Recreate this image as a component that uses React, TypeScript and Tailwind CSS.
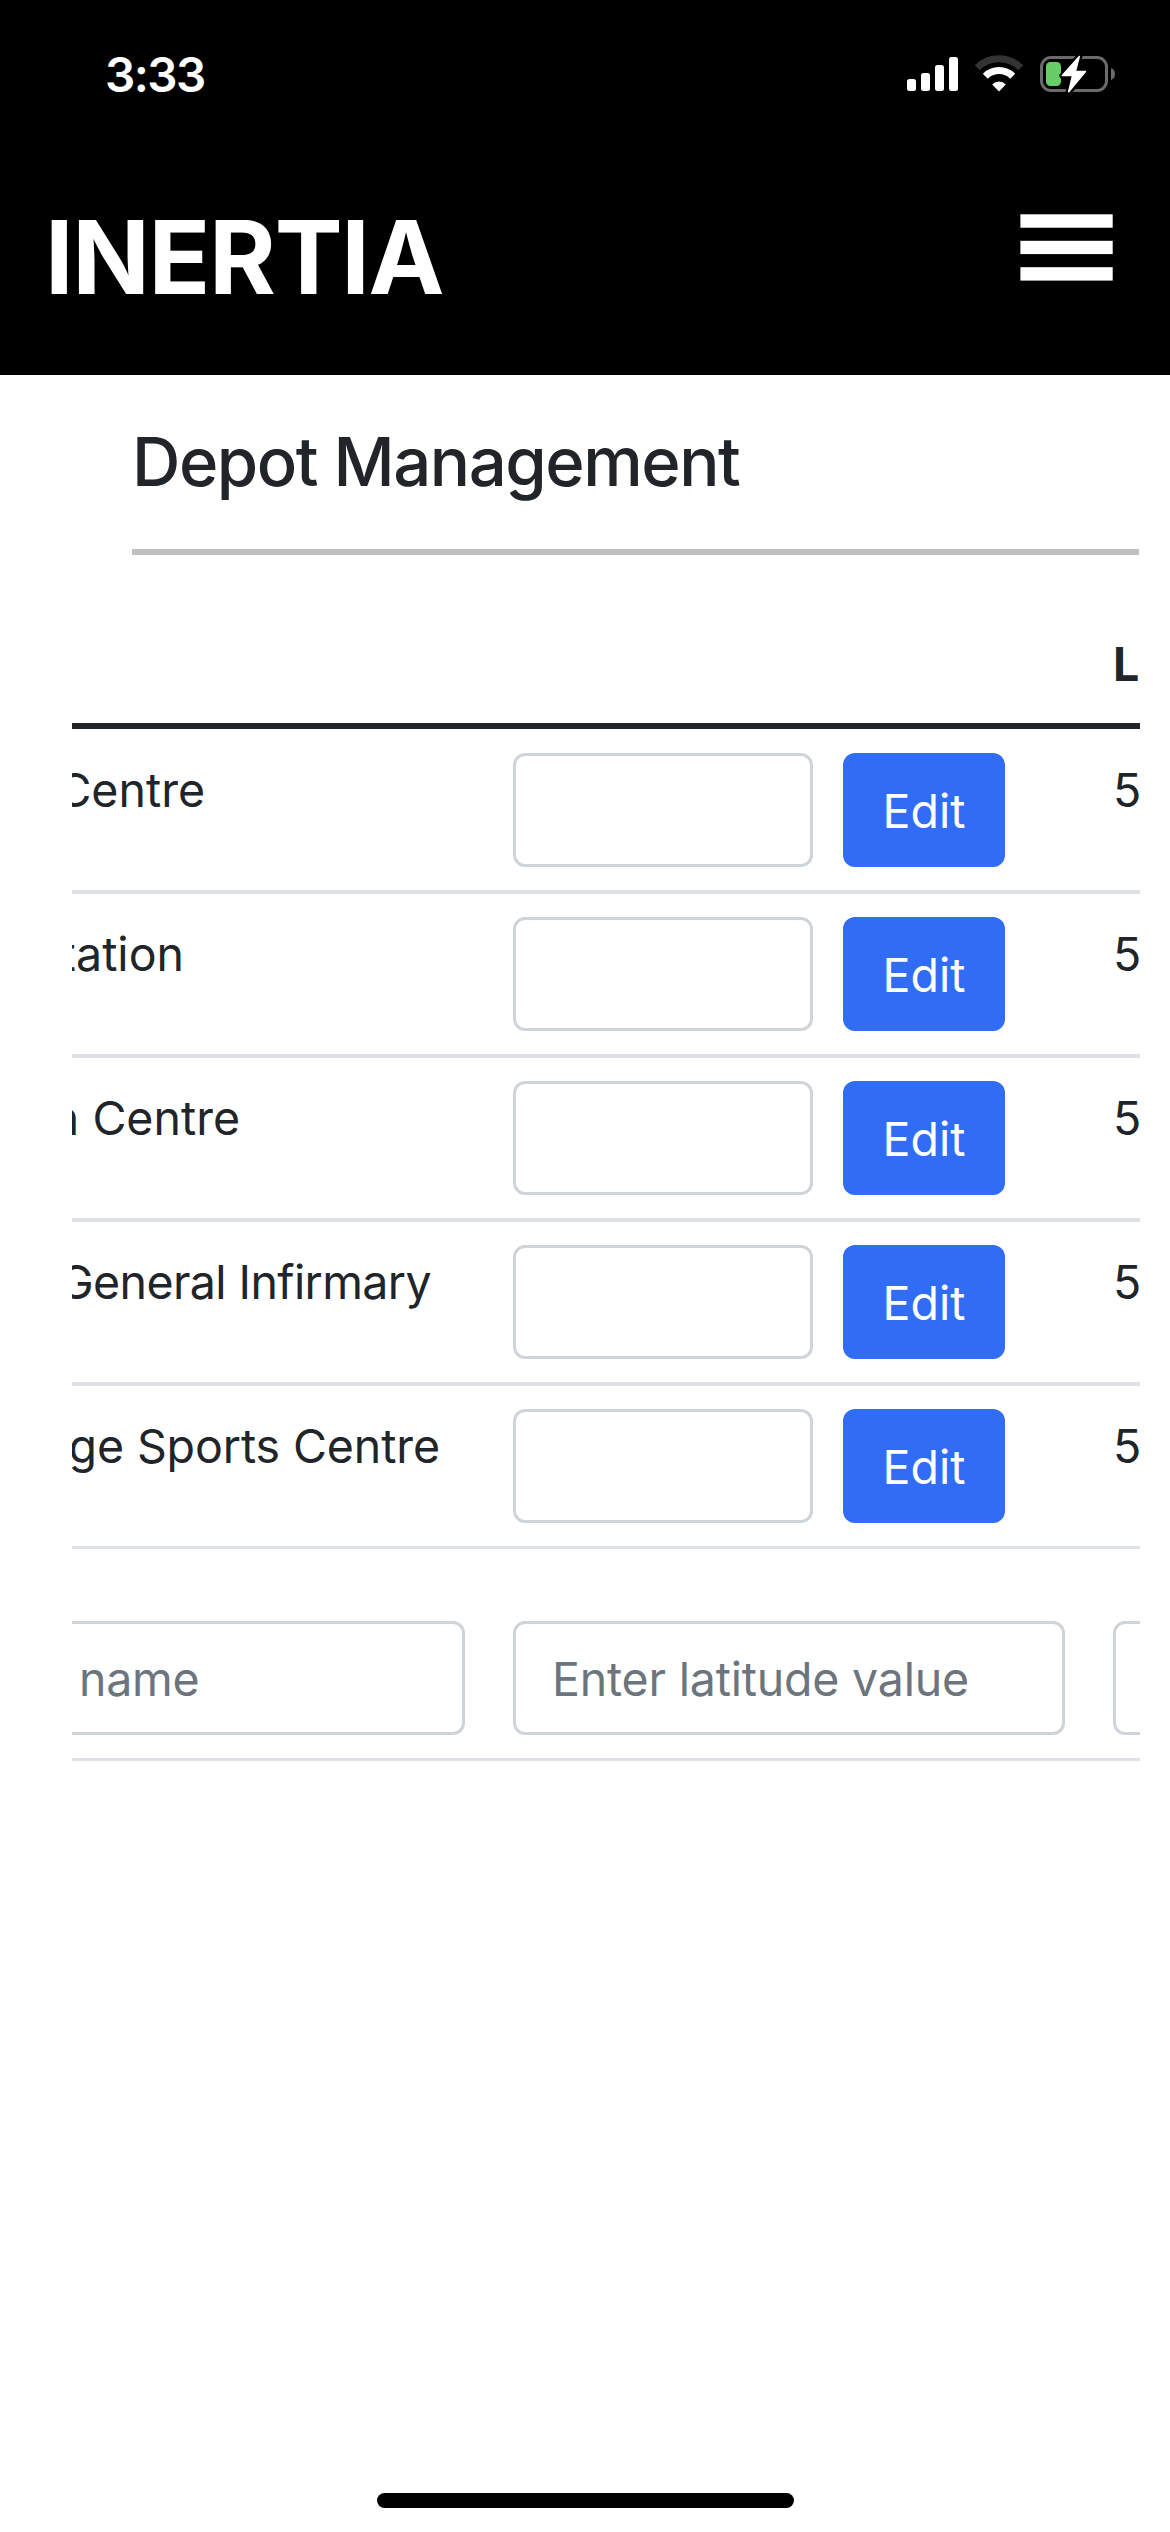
type Depot = { tail: string; box: string };

const depots: Depot[] = [
  { tail: "Centre", box: "w-[133px]" },
  { tail: "tation", box: "w-[112px]" },
  { tail: "n Centre", box: "w-[168px]" },
  { tail: "General Infirmary", box: "w-[359px] tracking-[-0.6px]" },
  { tail: "ge Sports Centre", box: "w-[368px] tracking-[-0.1px]" },
];

function SignalIcon() {
  return (
    <svg width="52" height="36" viewBox="0 0 52 36" fill="#fff">
      <rect x="0" y="23" width="9" height="12" rx="2.5" />
      <rect x="14" y="17" width="9" height="18" rx="2.5" />
      <rect x="28" y="9" width="9" height="26" rx="2.5" />
      <rect x="42" y="1" width="9" height="34" rx="2.5" />
    </svg>
  );
}

function WifiIcon() {
  return (
    <svg width="50" height="37" viewBox="0 0 50 37" fill="none">
      <path d="M3.2 12.8a31 31 0 0 1 43.6 0" stroke="#333" strokeWidth="7" />
      <path d="M11.3 21.2a19.5 19.5 0 0 1 27.4 0" stroke="#fff" strokeWidth="7" />
      <path d="M25 36.4 18.2 29.4a9.7 9.7 0 0 1 13.6 0Z" fill="#fff" />
    </svg>
  );
}

function BatteryIcon() {
  return (
    <svg width="76" height="38" viewBox="0 0 76 38" fill="none">
      <rect x="1.5" y="2.5" width="65" height="33" rx="9.5" stroke="#6b6b6b" strokeWidth="3" />
      <path d="M71 13c2.7 1 4 3.3 4 6s-1.3 5-4 6Z" fill="#6b6b6b" />
      <rect x="6" y="7" width="15" height="24" rx="4.5" fill="#65cf66" />
      <path
        d="M39.500 1 22.300 20.800h10.200L28.500 37.300 45.700 16.600H35.500Z"
        fill="#fff"
        stroke="#000"
        strokeWidth="6"
        strokeLinejoin="round"
      />
      <path
        d="M39.300 1.500 22.300 20.600h10.200L28.700 36.700 45.500 16.400H35.400Z"
        fill="#fff"
        stroke="#fff"
        strokeWidth="1.5"
        strokeLinejoin="round"
      />
    </svg>
  );
}

function StatusBar() {
  return (
    <div className="flex h-[141px] items-start justify-between pl-[105px] pr-[54px] pt-[55px]">
      <div className="-mt-[9px] text-[47.5px] font-semibold leading-[58px] tracking-[-1.5px]">3:33</div>
      <div className="flex">
        <div className="mr-[15px] pt-[1px]"><SignalIcon /></div>
        <div className="mr-[16px]"><WifiIcon /></div>
        <BatteryIcon />
      </div>
    </div>
  );
}

function DepotRow({ depot, last }: { depot: Depot; last: boolean }) {
  return (
    <div
      className={
        last
          ? "flex h-[163px] border-b-[3px] border-[#dee2e6] pt-[23px]"
          : "flex h-[164px] border-b-4 border-[#dee2e6] pt-[23px]"
      }
    >
      <div className="w-[441px] shrink-0 pt-[1px]">
        <div className={`flex justify-end overflow-hidden whitespace-nowrap leading-[72px] ${depot.box}`}>
          <span>{depot.tail}</span>
        </div>
      </div>
      <div className="mr-[30px] h-[114px] w-[300px] shrink-0 rounded-[12px] border-[3px] border-[#ced4da]" />
      <button className="flex h-[114px] w-[162px] shrink-0 items-center justify-center rounded-[12px] bg-[#316cf4] pt-[4px] text-white">
        Edit
      </button>
      <div className="ml-[108px] shrink-0 pt-[1px] leading-[72px]">5</div>
    </div>
  );
}

export default function App() {
  return (
    <div className="flex h-[2532px] w-[1170px] flex-col overflow-hidden bg-white font-['Inter',sans-serif] text-[46.5px] text-[#212529]">
      <header className="h-[375px] bg-black text-white">
        <StatusBar />
        <div className="flex items-start justify-between pl-[45px] pr-[57px] pt-[55px]">
          <div className="text-[101.8px] font-bold leading-[122px] tracking-[-1.3px]">INERTIA</div>
          <svg className="mt-[18px]" width="93" height="67" viewBox="0 0 93 67" fill="#fff">
            <rect x="0.4" y="0.3" width="92.3" height="13.4" />
            <rect x="0.4" y="26.8" width="92.3" height="13.3" />
            <rect x="0.4" y="53.2" width="92.3" height="13.4" />
          </svg>
        </div>
      </header>
      <h1 className="ml-[132px] mr-[31px] h-[180px] border-b-[6px] border-[#bfbfbf] pt-[47px] text-[67px] font-medium leading-[80px] tracking-[-1.45px]">
        Depot Management
      </h1>
      <main className="ml-[72px] mr-[30px] mt-[69px] overflow-hidden">
        <div className="mb-[1px] h-[105px] border-b-[6px] border-[#212529] pl-[1041px] pt-[4px] font-bold leading-[72px]">
          L
        </div>
        {depots.map((depot, index) => (
          <DepotRow key={depot.tail} depot={depot} last={index === depots.length - 1} />
        ))}
        <div className="flex h-[212px] border-b-[3px] border-[#dee2e6] pt-[72px] text-[#6c757d]">
          <div className="mr-[48px] flex h-[114px] w-[393px] shrink-0 items-center rounded-r-[12px] border-y-[3px] border-r-[3px] border-[#ced4da] pl-[7px] pt-[3px] tracking-[-0.3px]">
            name
          </div>
          <div className="mr-[48px] flex h-[114px] w-[552px] shrink-0 items-center rounded-[12px] border-[3px] border-[#ced4da] pl-[36px] pt-[3px] tracking-[-0.2px]">
            Enter latitude value
          </div>
          <div className="h-[114px] w-[552px] shrink-0 rounded-[12px] border-[3px] border-[#ced4da]" />
        </div>
      </main>
      <div className="mb-[24px] ml-[377px] mt-auto h-[15px] w-[417px] rounded-full bg-black" />
    </div>
  );
}
